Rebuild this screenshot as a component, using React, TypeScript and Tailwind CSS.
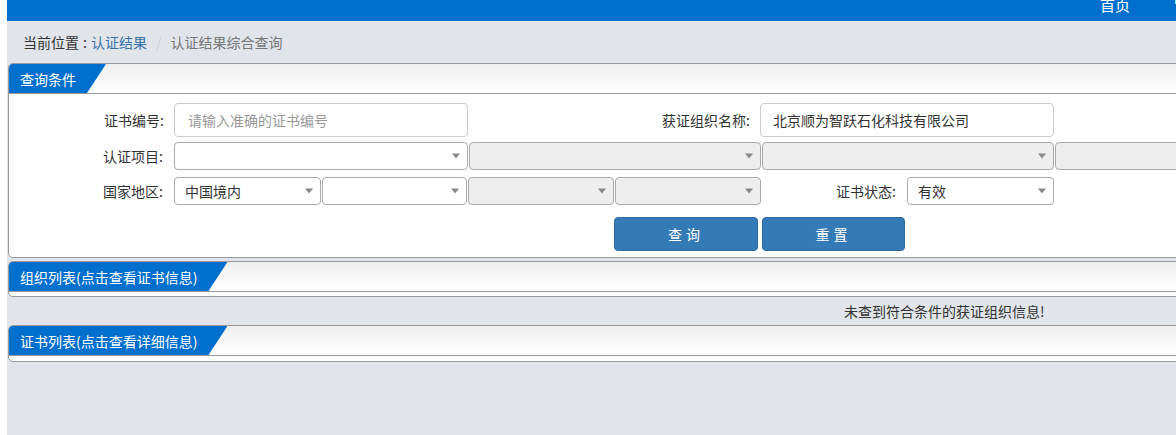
import React from 'react';

const Arrow = () => (
  <span className="absolute right-[7px] top-1/2 -translate-y-1/2 w-0 h-0 border-l-[4px] border-r-[4px] border-t-[5px] border-l-transparent border-r-transparent border-t-[#888]" />
);

const Select: React.FC<{ w: string; value?: string; disabled?: boolean }> = ({ w, value, disabled }) => (
  <div
    className={`relative h-[28px] ${w} shrink-0 border border-[#aaa] rounded-[4px] flex items-center pl-[10px] text-[14px] text-[#333] ${
      disabled ? 'bg-[#eee]' : 'bg-white'
    }`}
  >
    {value}
    <Arrow />
  </div>
);

const Panel: React.FC<{ title: string; children?: React.ReactNode }> = ({ title, children }) => (
  <div className="w-[1220px] ml-px border border-[#999] rounded-l-[5px] bg-white overflow-hidden">
    <div className="h-[30px] border-b border-[#999] bg-linear-to-b from-[#efefef] to-white">
      <div className="h-full inline-flex items-center pl-[11px] pr-[30px] bg-[#006fcd] text-white text-[14px] leading-none [clip-path:polygon(0_0,100%_0,calc(100%-19px)_100%,0_100%)]">
        {title}
      </div>
    </div>
    {children}
  </div>
);

const Label: React.FC<{ w: string; children: React.ReactNode }> = ({ w, children }) => (
  <div className={`${w} shrink-0 text-right pr-[10px] text-[14px] text-[#333]`}>{children}</div>
);

export default function App() {
  return (
    <div className="w-[1176px] h-[435px] overflow-hidden bg-white pl-[7px] font-['Noto_Sans_CJK_SC','Noto_Sans',sans-serif]">
      <div className="h-full bg-[#e1e5ea] overflow-hidden">
        {/* top bar */}
        <div className="h-[21px] bg-[#006fcd] flex items-start text-white text-[15px] leading-[15px] overflow-hidden whitespace-nowrap">
          <span className="shrink-0 ml-[1093px] -mt-[3px]">首页</span>
          <span className="shrink-0 ml-[43px] -mt-[11px]">帮助</span>
        </div>

        {/* breadcrumb */}
        <div className="h-[42px] flex items-center pl-[16px] text-[14px] leading-none">
          <span className="text-[#333]">当前位置</span>
          <span className="text-[#333] px-[4px]">:</span>
          <span className="text-[#3a73a8]">认证结果</span>
          <span className="text-[#ccc] px-[9px]">/</span>
          <span className="text-[#777]">认证结果综合查询</span>
        </div>

        <Panel title="查询条件">
          <div className="pt-[9px] pb-[6px] leading-none">
            <div className="flex items-center">
              <Label w="w-[165px]">证书编号:</Label>
              <div className="w-[294px] h-[34px] border border-[#ccc] rounded-[4px] flex items-center pl-[13px] text-[14px] text-[#999]">
                请输入准确的证书编号
              </div>
              <Label w="w-[292px]">获证组织名称:</Label>
              <div className="w-[294px] h-[34px] border border-[#ccc] rounded-[4px] flex items-center pl-[12px] text-[14px] text-[#333]">
                北京顺为智跃石化科技有限公司
              </div>
            </div>

            <div className="flex items-center mt-[5px] gap-px">
              <Label w="w-[164px]">认证项目:</Label>
              <Select w="w-[294px]" />
              <Select w="w-[292px]" disabled />
              <Select w="w-[292px]" disabled />
              <Select w="w-[292px]" disabled />
            </div>

            <div className="flex items-center mt-[7px] gap-px">
              <Label w="w-[164px]">国家地区:</Label>
              <Select w="w-[147px]" value="中国境内" />
              <Select w="w-[145px]" />
              <Select w="w-[146px]" disabled />
              <Select w="w-[146px]" disabled />
              <Label w="w-[144px]">证书状态:</Label>
              <Select w="w-[147px]" value="有效" />
            </div>

            <div className="flex mt-[12px] pl-[605px] gap-[4px]">
              <button className="w-[144px] h-[34px] bg-[#337ab7] border border-[#2e6da4] rounded-[4px] text-white text-[14px] tracking-[4px]">
                查询
              </button>
              <button className="w-[143px] h-[34px] bg-[#337ab7] border border-[#2e6da4] rounded-[4px] text-white text-[14px] tracking-[4px]">
                重置
              </button>
            </div>
          </div>
        </Panel>

        <div className="mt-[3px]">
          <Panel title="组织列表(点击查看证书信息)">
            <div className="h-[4px]" />
          </Panel>
        </div>

        <div className="h-[28px] flex items-center pl-[837px] text-[14px] text-[#333] leading-none">
          未查到符合条件的获证组织信息!
        </div>

        <Panel title="证书列表(点击查看详细信息)">
          <div className="h-[5px]" />
        </Panel>
      </div>
    </div>
  );
}
